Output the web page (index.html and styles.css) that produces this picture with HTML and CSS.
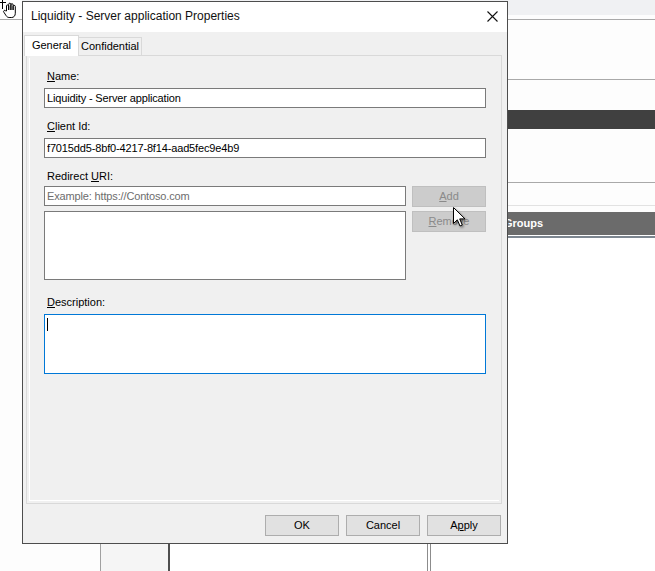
FILE: index.html
```html
<!DOCTYPE html>
<html>
<head>
<meta charset="utf-8">
<title>Liquidity - Server application Properties</title>
<link rel="stylesheet" href="styles.css">
</head>
<body>
<div class="app">
  <div class="strip"></div>
  <div class="rule rule-a"></div>
  <div class="pane">
    <div class="rule rule-b"></div>
    <div class="darkbar"></div>
    <div class="rule rule-c"></div>
    <div class="rule-light"></div>
    <div class="groupbar">Groups</div>
    <div class="groupline"></div>
  </div>
  <div class="columns">
    <div class="col c1"></div>
    <div class="col c2"></div>
    <div class="col c3"></div>
    <div class="col c4"></div>
  </div>

  <svg class="hand" width="20" height="20" viewBox="0 0 20 20">
    <path d="M0 2.5H6M2.5 0V9" stroke="#000" stroke-width="1" fill="none"/>
    <path d="M6.5 11V6a1.1 1.1 0 0 1 2.2 0V10V4.3a1.1 1.1 0 0 1 2.2 0V10V4.8a1.1 1.1 0 0 1 2.2 0V10V6.5a1.1 1.1 0 0 1 2.2 0v6.8c0 2.6-1.6 4.2-3.6 4.2h-2.6c-1.4 0-2.3-.8-3.1-2l-2.2-3.4a1.1 1.1 0 0 1 1.8-1.3z" fill="#fff" stroke="#000" stroke-width="1" stroke-linejoin="round"/>
  </svg>

  <div class="dialog">
    <div class="titlebar">
      <div class="title">Liquidity - Server application Properties</div>
      <div class="close">
        <svg width="11" height="11" viewBox="0 0 11 11"><path d="M0.5 0.5L10.5 10.5M10.5 0.5L0.5 10.5" stroke="#111" stroke-width="1.1"/></svg>
      </div>
    </div>
    <div class="body">
      <div class="tabs">
        <div class="tab active">General</div>
        <div class="tab idle">Confidential</div>
      </div>
      <div class="panel">
        <div class="page">
          <div class="label"><u>N</u>ame:</div>
          <input class="field" type="text" value="Liquidity - Server application">
          <div class="label gap"><u>C</u>lient Id:</div>
          <input class="field" type="text" value="f7015dd5-8bf0-4217-8f14-aad5fec9e4b9">
          <div class="label gap">Redirect <u>U</u>RI:</div>
          <div class="uri-grid">
            <input class="field" type="text" placeholder="Example: https://Contoso.com">
            <div class="btn disabled"><u>A</u>dd</div>
            <div class="listbox"></div>
            <div class="btn disabled"><u>R</u>emove</div>
          </div>
          <div class="label desc-label"><u>D</u>escription:</div>
          <div class="textarea"><span class="caret"></span></div>
        </div>
      </div>
    </div>
    <div class="footer">
      <div class="btn">OK</div>
      <div class="btn">Cancel</div>
      <div class="btn">A<u>p</u>ply</div>
    </div>
  </div>

  <svg class="pointer" width="16" height="24" viewBox="0 0 16 24">
    <defs>
      <filter id="sh" x="-50%" y="-50%" width="200%" height="200%">
        <feDropShadow dx="1.2" dy="1.5" stdDeviation="1" flood-color="#000" flood-opacity="0.45"/>
      </filter>
    </defs>
    <path d="M0.5 0.5V16.5L4.3 12.8L7 19L9.3 18L6.7 11.9H12Z" fill="#fff" stroke="#000" stroke-width="1" stroke-linejoin="miter" filter="url(#sh)"/>
  </svg>
</div>
</body>
</html>
```
FILE: styles.css
```css
* { box-sizing: border-box; }
html, body { margin: 0; padding: 0; }
body {
  width: 655px;
  height: 571px;
  overflow: hidden;
  background: #fff;
  font-family: "Liberation Sans", Arial, sans-serif;
  font-size: 11px;
  color: #000;
}
.app {
  position: relative;
  width: 655px;
  height: 571px;
  display: flex;
  flex-direction: column;
  background: #fdfdfd;
}
.strip { flex: none; height: 15px; margin-left: 22px; background: #f0f1f3; }
.rule { flex: none; height: 1px; background: #a9a9a9; }
.rule-a { margin-top: 4px; }
.pane { flex: none; margin-left: 22px; display: flex; flex-direction: column; }
.rule-b { margin-top: 59px; }
.darkbar { flex: none; margin-top: 30px; height: 19px; background: #404040; }
.rule-c { margin-top: 53px; }
.rule-light { flex: none; margin-top: 22px; height: 1px; background: #e2e2e2; }
.groupbar {
  flex: none;
  margin-top: 6px;
  height: 23px;
  background: #6b6b6b;
  color: #fff;
  font-weight: bold;
  font-size: 11px;
  line-height: 23px;
  padding-left: 482px;
}
.groupline { flex: none; height: 3px; border-top: 1px solid #fff; background: #7d8690; }
.columns { flex: 1; display: flex; }
.col { height: 100%; }
.c1 { width: 100px; }
.c2 { width: 70px; background: #f5f5f5; border-left: 1px solid #a0a0a0; border-right: 2px solid #4f4f4f; }
.c3 { width: 257px; background: #fff; }
.c4 { flex: 1; background: #fff; border-left: 4px double #8c8c8c; }

.hand { position: absolute; left: 0; top: 0; }
.pointer { position: absolute; left: 453px; top: 207px; z-index: 5; overflow: visible; }

.dialog {
  position: absolute;
  left: 22px;
  top: 1px;
  width: 486px;
  height: 543px;
  border: 1px solid #4d4d4d;
  background: #f0f0f0;
  display: flex;
  flex-direction: column;
  z-index: 2;
}
.titlebar {
  flex: none;
  height: 30px;
  background: #fff;
  display: flex;
  align-items: center;
  padding: 0 0 2px 8px;
}
.title { flex: 1; font-size: 12px; color: #111; }
.close { width: 30px; height: 28px; display: flex; align-items: center; justify-content: center; }

.body { flex: 1; display: flex; flex-direction: column; padding: 3px 5px 0 3px; }
.tabs {
  flex: none;
  display: flex;
  align-items: flex-end;
  height: 21px;
  margin: 0 0 -1px -2px;
  position: relative;
  z-index: 1;
}
.tab { border: 1px solid #d9d9d9; border-bottom: none; text-align: center; line-height: 13px; white-space: nowrap; }
.tab.active { width: 55px; height: 21px; background: #fff; padding-top: 3px; }
.tab.idle { width: 63px; height: 18px; margin-bottom: 1px; border-left: none; background: #f0f0f0; padding-top: 2px; }

.panel { flex: 1; border: 1px solid #d9d9d9; padding: 2px; display: flex; }
.page {
  flex: 1;
  border-left: 1px solid #fff;
  border-bottom: 1px solid #fff;
  padding: 11px 13px 0 14px;
}
.label { line-height: 14px; height: 14px; padding-left: 3px; }
.label.gap { margin-top: 11px; }
.desc-label { margin-top: 15px; }
.field {
  display: block;
  width: 100%;
  height: 20px;
  margin: 5px 0 0 0;
  border: 1px solid #7a7a7a;
  background: #fff;
  padding: 0 2px;
  font: inherit;
  font-size: 11px;
  letter-spacing: -0.15px;
  color: #000;
  outline: none;
}
.field::placeholder { color: #6d6d6d; opacity: 1; }
.uri-grid {
  margin-top: 3px;
  display: grid;
  grid-template-columns: 1fr 74px;
  grid-template-rows: 21px 69px;
  column-gap: 6px;
  row-gap: 4px;
}
.uri-grid .field { margin: 0; }
.listbox { border: 1px solid #7a7a7a; background: #fff; }
.textarea {
  margin-top: 5px;
  height: 60px;
  border: 1px solid #0078d7;
  background: #fff;
  padding: 3px 0 0 2px;
}
.caret { display: block; width: 1px; height: 13px; background: #000; }

.btn {
  width: 74px;
  height: 21px;
  border: 1px solid #adadad;
  background: #e1e1e1;
  text-align: center;
  line-height: 19px;
  font-size: 11px;
  color: #000;
}
.btn.disabled { background: #cccccc; border-color: #bfbfbf; color: #8a8a8a; }

.footer {
  flex: none;
  height: 39px;
  display: flex;
  justify-content: flex-end;
  gap: 7px;
  padding: 11px 6px 7px 0;
}
```
